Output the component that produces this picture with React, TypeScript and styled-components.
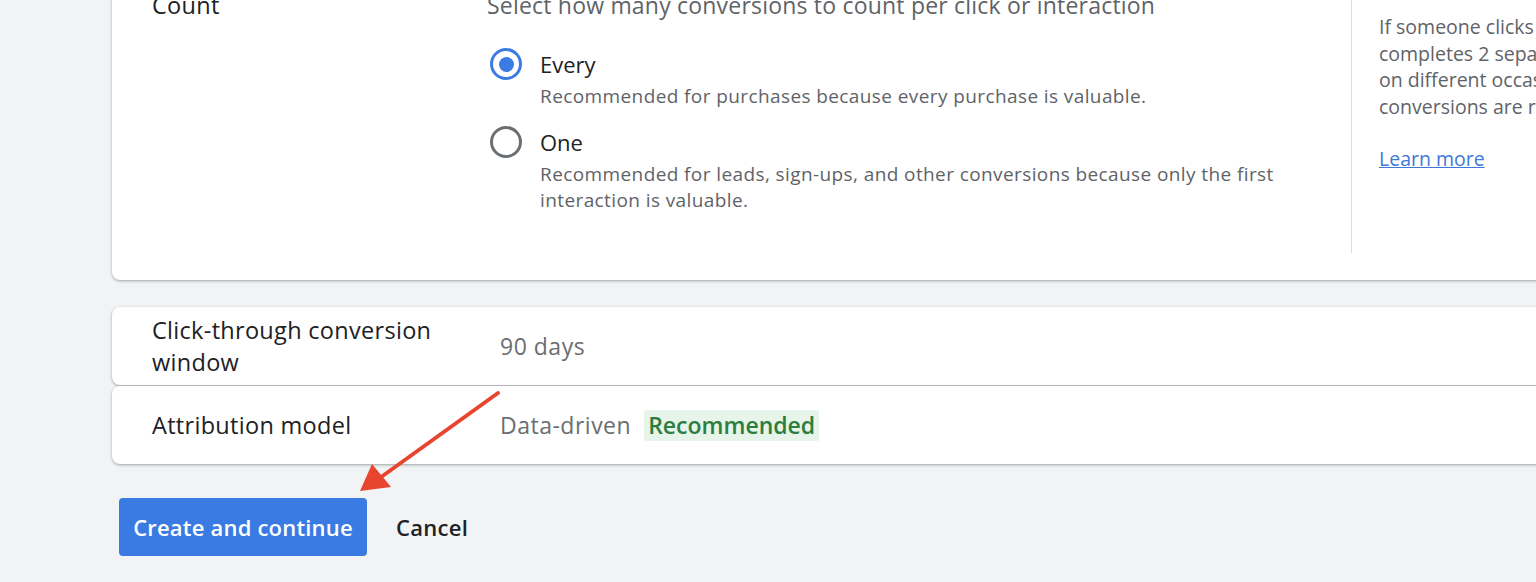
import React from "react";
import styled, { createGlobalStyle } from "styled-components";

const GlobalStyle = createGlobalStyle`
  html, body {
    margin: 0;
    padding: 0;
    background: #f1f3f4;
    font-family: "Open Sans", Roboto, Arial, sans-serif;
    overflow: hidden;
  }
`;

const Page = styled.div`
  position: relative;
  width: 1536px;
  height: 582px;
  overflow: hidden;
  padding-left: 112px;
  box-sizing: border-box;
`;

const Card = styled.div`
  background: #fff;
  border-radius: 8px;
  margin-right: -60px;
  box-shadow: 0 1px 2px rgba(60, 64, 67, 0.3), 0 1px 3px 1px rgba(60, 64, 67, 0.12);
`;

const CountCard = styled(Card)`
  margin-top: -40px;
  height: 320px;
  display: grid;
  grid-template-columns: 335px 864px 1fr;
  padding-left: 40px;
  box-sizing: border-box;
`;

const Label = styled.div`
  font-size: 23.5px;
  line-height: 32px;
  color: #202124;
  letter-spacing: 0.3px;
`;

const CountLabel = styled(Label)`
  padding-top: 29px;
`;

const Options = styled.div`
  padding-top: 32px;
`;

const Prompt = styled.div`
  font-size: 23px;
  line-height: 26px;
  letter-spacing: 0.2px;
  color: #5f6368;
`;

const RadioList = styled.div`
  margin-top: 30px;
  display: flex;
  flex-direction: column;
  gap: 17px;
`;

const RadioRow = styled.div`
  display: grid;
  grid-template-columns: 53px 1fr;
  align-items: start;
`;

const RadioCircle = styled.span<{ $checked?: boolean }>`
  margin-left: 3px;
  width: 32px;
  height: 32px;
  box-sizing: border-box;
  border-radius: 50%;
  border: 3px solid ${(p) => (p.$checked ? "#3d7be4" : "#6b6f73")};
  display: flex;
  align-items: center;
  justify-content: center;

  &::after {
    content: "";
    width: 15px;
    height: 15px;
    border-radius: 50%;
    background: #3d7be4;
    display: ${(p) => (p.$checked ? "block" : "none")};
  }
`;

const OptionTitle = styled.div`
  font-size: 22px;
  line-height: 32px;
  color: #202124;
`;

const OptionDesc = styled.div`
  margin-top: 3px;
  font-size: 19px;
  line-height: 26px;
  color: #5f6368;
  letter-spacing: 0.4px;
  max-width: 770px;
`;

const Help = styled.div`
  align-self: start;
  height: 293px;
  border-left: 1px solid #dadce0;
  padding: 54px 0 0 27px;
  box-sizing: border-box;
  font-size: 19.5px;
  line-height: 26.5px;
  color: #5f6368;
  white-space: nowrap;
`;

const HelpLink = styled.a`
  display: block;
  margin-top: 26px;
  color: #4079d6;
  text-decoration: underline;
`;

const RowGroup = styled.div`
  margin-top: 27px;
  display: flex;
  flex-direction: column;
  gap: 1px;
`;

const SettingRow = styled(Card)<{ $h: number }>`
  height: ${(p) => p.$h}px;
  display: grid;
  grid-template-columns: 348px 1fr;
  align-items: center;
  padding-left: 40px;
`;

const Value = styled.div`
  display: flex;
  align-items: center;
  gap: 13px;
  font-size: 23px;
  letter-spacing: 0.5px;
  color: #6a6e72;
`;

const Badge = styled.span`
  background: #e6f4ea;
  color: #2d7d3f;
  font-weight: 600;
  letter-spacing: 0;
  padding: 0 4px;
  line-height: 31px;
  border-radius: 2px;
`;

const Actions = styled.div`
  margin-top: 34px;
  padding-left: 7px;
  display: flex;
  align-items: center;
  gap: 29px;
`;

const PrimaryButton = styled.button`
  width: 248px;
  height: 58px;
  padding: 0;
  border: none;
  border-radius: 4px;
  background: #3a7be3;
  color: #fff;
  font-family: inherit;
  font-size: 22px;
  font-weight: 600;
  letter-spacing: 0.2px;
`;

const TextButton = styled.button`
  border: none;
  background: none;
  padding: 0;
  color: #202124;
  font-family: inherit;
  font-size: 22px;
  font-weight: 600;
  letter-spacing: 0.3px;
`;

const Overlay = styled.svg`
  position: absolute;
  left: 0;
  top: 0;
  pointer-events: none;
`;

export default function App() {
  return (
    <>
      <GlobalStyle />
      <Page>
        <CountCard>
          <CountLabel>Count</CountLabel>
          <Options>
            <Prompt>Select how many conversions to count per click or interaction</Prompt>
            <RadioList>
              <RadioRow>
                <RadioCircle $checked />
                <div>
                  <OptionTitle>Every</OptionTitle>
                  <OptionDesc>Recommended for purchases because every purchase is valuable.</OptionDesc>
                </div>
              </RadioRow>
              <RadioRow>
                <RadioCircle />
                <div>
                  <OptionTitle>One</OptionTitle>
                  <OptionDesc>
                    Recommended for leads, sign-ups, and other conversions because only the first
                    interaction is valuable.
                  </OptionDesc>
                </div>
              </RadioRow>
            </RadioList>
          </Options>
          <Help>
            If someone clicks your ad and
            <br />
            completes 2 separate purchases
            <br />
            on different occasions, 2
            <br />
            conversions are recorded.
            <HelpLink href="#">Learn more</HelpLink>
          </Help>
        </CountCard>

        <RowGroup>
          <SettingRow $h={78}>
            <Label>
              Click-through conversion
              <br />
              window
            </Label>
            <Value>90 days</Value>
          </SettingRow>
          <SettingRow $h={78}>
            <Label>Attribution model</Label>
            <Value>
              Data-driven <Badge>Recommended</Badge>
            </Value>
          </SettingRow>
        </RowGroup>

        <Actions>
          <PrimaryButton>Create and continue</PrimaryButton>
          <TextButton>Cancel</TextButton>
        </Actions>

        <Overlay width="1536" height="582" viewBox="0 0 1536 582">
          <line x1="498" y1="393" x2="377" y2="480" stroke="#e8452f" strokeWidth="4" strokeLinecap="round" />
          <polygon points="360,491 372,464 391,487" fill="#e8452f" />
        </Overlay>
      </Page>
    </>
  );
}
